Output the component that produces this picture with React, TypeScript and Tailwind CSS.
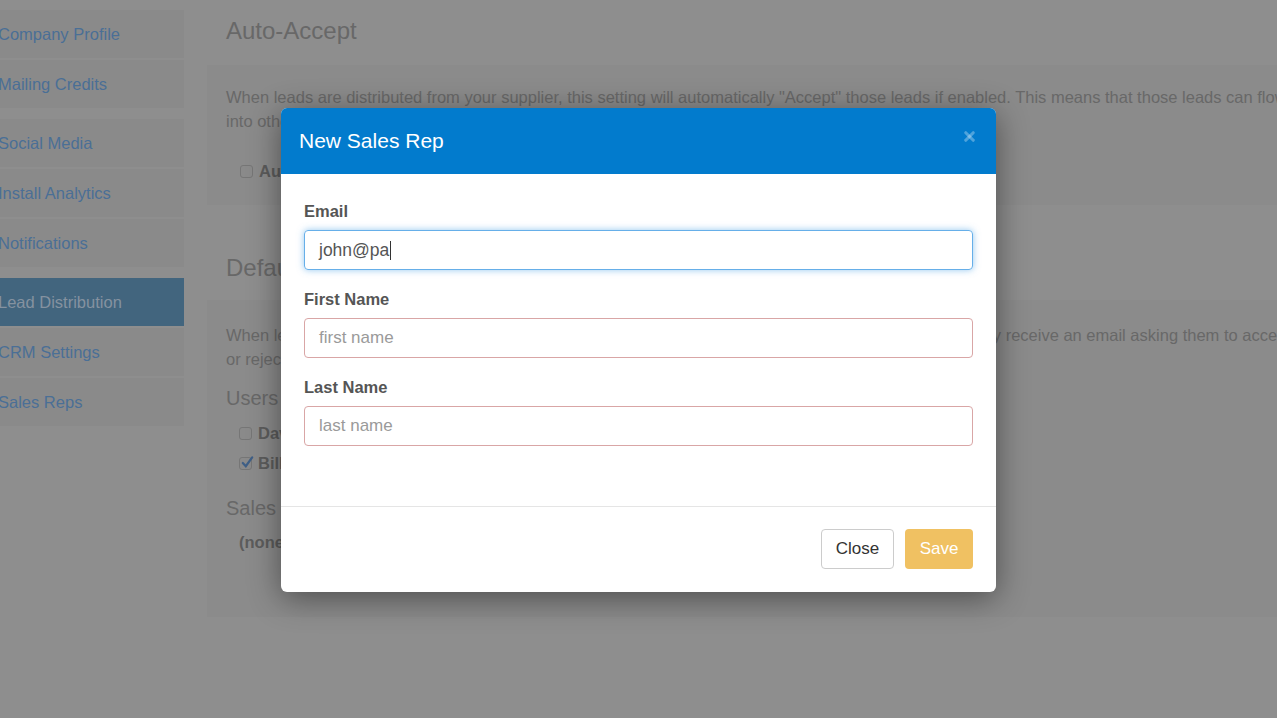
import React from "react";
import { X } from "lucide-react";

const font = { fontFamily: '"Liberation Sans", Arial, sans-serif' };

const navGroups = [
  ["Company Profile", "Mailing Credits"],
  ["Social Media", "Install Analytics", "Notifications"],
  ["Lead Distribution", "CRM Settings", "Sales Reps"],
];

function Checkbox({ checked }: { checked?: boolean }) {
  return (
    <span className="relative inline-block w-[13px] h-[13px] rounded-[3px] border border-[#767676] bg-[#8a8a8a] shrink-0">
      {checked && (
        <svg viewBox="0 0 16 16" className="absolute -top-[3px] left-0 w-[15px] h-[15px]">
          <path d="M3 8.5l3.2 3.5L13 2.5" fill="none" stroke="#3f5f86" strokeWidth="2.4" strokeLinecap="round" />
        </svg>
      )}
    </span>
  );
}

function Field({ label, placeholder, value, focused }: { label: string; placeholder?: string; value?: string; focused?: boolean }) {
  return (
    <div>
      <div className="text-[16.5px] leading-[22px] font-bold text-[#555]">{label}</div>
      <div
        className={`mt-[8px] h-[40px] rounded-[4px] border flex items-center pl-[14px] ${
          focused
            ? "border-[#66afe9] shadow-[0_0_7px_rgba(102,175,233,0.7)] text-[#555] text-[17.5px]"
            : "border-[#d9a6a6] text-[#9a9a9a] text-[17px]"
        }`}
      >
        {value ? (
          <>
            <span>{value}</span>
            <span className="inline-block w-px h-[19px] bg-[#333] ml-[1px]" />
          </>
        ) : (
          <span>{placeholder}</span>
        )}
      </div>
    </div>
  );
}

export default function App() {
  return (
    <div className="relative w-full h-[718px] overflow-hidden bg-[#8e8e8e]" style={font}>
      {/* dimmed page behind the modal */}
      <div className="flex">
        <nav className="w-[184px] shrink-0 pt-[10px]">
          {navGroups.map((group, gi) => (
            <div key={gi} className="mb-[11px] space-y-[2px]">
              {group.map((item) => (
                <div
                  key={item}
                  className={`h-[48px] flex items-center text-[16.5px] ${
                    item === "Lead Distribution" ? "bg-[#42657e] text-[#8592a0]" : "bg-[#8a8a8a] text-[#4a6f96]"
                  }`}
                >
                  <span className="-ml-[2px]">{item}</span>
                </div>
              ))}
            </div>
          ))}
        </nav>

        <main className="ml-[23px] w-[1120px] shrink-0 pt-[15px] text-[#686868]">
          <h2 className="pl-[19px] text-[24px] leading-[32px]">Auto-Accept</h2>
          <section className="mt-[18px] bg-[#8b8b8b] px-[19px] pt-[20px] pb-[22px] text-[16.5px] leading-[24px]">
            <p className="whitespace-nowrap">
              When leads are distributed from your supplier, this setting will automatically "Accept" those leads if enabled. This means that those leads can flow
            </p>
            <p className="whitespace-nowrap">into other systems without any further action from your team.</p>
            <label className="mt-[26px] flex items-center gap-[6px] pl-[14px] font-bold text-[#5c5c5c]">
              <Checkbox />
              Auto-Accept Leads
            </label>
          </section>

          <h2 className="mt-[47px] pl-[19px] text-[24px] leading-[32px]">Default Distribution</h2>
          <section className="mt-[16px] bg-[#8b8b8b] px-[19px] pt-[23px] pb-[63px] text-[16.5px] leading-[24px]">
            <p className="whitespace-nowrap">
              When leads are distributed to the users selected below, each of those users will get notified, and then they receive an email asking them to accept
            </p>
            <p className="whitespace-nowrap">or reject the leads before they are added to their account.</p>
            <h3 className="mt-[13px] text-[20px] leading-[28px]">Users</h3>
            <label className="mt-[9px] flex items-center gap-[6px] pl-[13px] font-bold text-[#5c5c5c]">
              <Checkbox />
              Dave Miller
            </label>
            <label className="mt-[6px] flex items-center gap-[6px] pl-[13px] font-bold text-[#5c5c5c]">
              <Checkbox checked />
              Bill Thompson
            </label>
            <h3 className="mt-[19px] text-[20px] leading-[28px]">Sales Reps</h3>
            <p className="mt-[8px] pl-[13px] font-bold text-[#5c5c5c]">(none)</p>
          </section>
        </main>
      </div>

      {/* modal */}
      <div className="absolute inset-0 flex justify-center pt-[108px]">
        <div className="w-[715px] h-[484px] bg-white rounded-[6px] overflow-hidden shadow-[0_6px_32px_rgba(0,0,0,0.45)] flex flex-col">
          <div className="h-[66px] shrink-0 bg-[#027bcd] flex items-center justify-between pl-[18px] pr-[19px]">
            <h1 className="text-[21px] text-white">New Sales Rep</h1>
            <X className="w-[15px] h-[15px] text-white/30 -mt-[9px]" strokeWidth={5} />
          </div>
          <div className="px-[23px] pt-[26px] pb-[60px] space-y-[18px]">
            <Field label="Email" value="john@pa" focused />
            <Field label="First Name" placeholder="first name" />
            <Field label="Last Name" placeholder="last name" />
          </div>
          <div className="border-t border-[#e5e5e5] flex justify-end gap-[11px] pt-[22px] pr-[23px]">
            <button className="h-[40px] w-[73px] rounded-[4px] border border-[#ccc] bg-white text-[17px] text-[#333]">Close</button>
            <button className="h-[40px] w-[68px] rounded-[4px] bg-[#f0c162] text-[17px] text-white">Save</button>
          </div>
        </div>
      </div>
    </div>
  );
}
